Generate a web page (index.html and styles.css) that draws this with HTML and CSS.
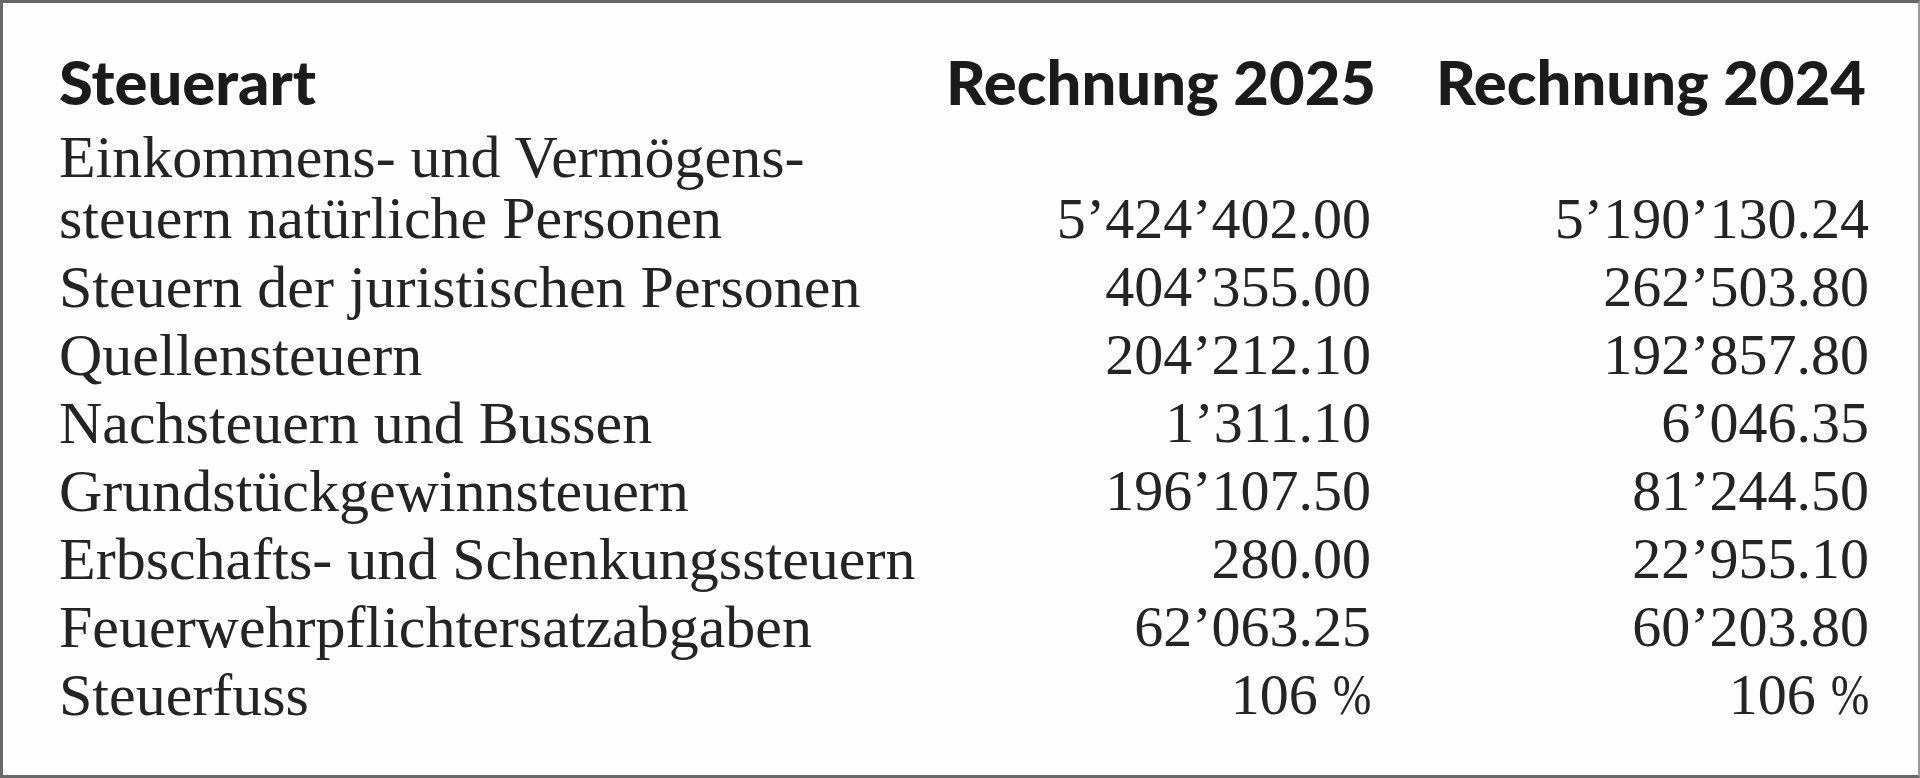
FILE: index.html
```html
<!DOCTYPE html>
<html lang="de">
<head>
<meta charset="utf-8">
<title>Steuerarten</title>
<link rel="stylesheet" href="styles.css">
</head>
<body>
<div class="frame">
  <div class="table">
    <div class="hd label">Steuerart</div>
    <div class="hd num">Rechnung 2025</div>
    <div class="hd num">Rechnung 2024</div>

    <div class="cell label two">Einkommens- und Vermögens-<br>steuern natürliche Personen</div>
    <div class="cell num">5’424’402.00</div>
    <div class="cell num">5’190’130.24</div>

    <div class="cell label">Steuern der juristischen Personen</div>
    <div class="cell num">404’355.00</div>
    <div class="cell num">262’503.80</div>

    <div class="cell label">Quellensteuern</div>
    <div class="cell num">204’212.10</div>
    <div class="cell num">192’857.80</div>

    <div class="cell label">Nachsteuern und Bussen</div>
    <div class="cell num">1’311.10</div>
    <div class="cell num">6’046.35</div>

    <div class="cell label">Grundstückgewinnsteuern</div>
    <div class="cell num">196’107.50</div>
    <div class="cell num">81’244.50</div>

    <div class="cell label">Erbschafts- und Schenkungssteuern</div>
    <div class="cell num">280.00</div>
    <div class="cell num">22’955.10</div>

    <div class="cell label">Feuerwehrpflichtersatzabgaben</div>
    <div class="cell num">62’063.25</div>
    <div class="cell num">60’203.80</div>

    <div class="cell label">Steuerfuss</div>
    <div class="cell num">106&#8202;<span class="pct">%</span></div>
    <div class="cell num">106&#8202;<span class="pct">%</span></div>
  </div>
</div>
</body>
</html>
```

FILE: styles.css
```css
html, body {
  margin: 0;
  padding: 0;
  background: #ffffff;
}

.frame {
  box-sizing: border-box;
  width: 1920px;
  height: 778px;
  border-top: 3px solid #666666;
  border-left: 3px solid #6a6a6a;
  border-bottom: 3px solid #6a6a6a;
  border-right: 2px solid #9a9a9a;
  background: #fefefe;
  padding: 44px 49px 0 56px;
  color: #1e1e1e;
}

.table {
  display: grid;
  grid-template-columns: 1fr 425px 498px;
}

.hd {
  font-family: Lato, "Open Sans", sans-serif;
  font-weight: 900;
  font-size: 61.5px;
  line-height: 68px;
  margin-bottom: 12px;
  color: #1b1b1b;
}

.hd.num {
  padding-right: 3px;
}

.cell {
  font-family: "Liberation Serif", "Times New Roman", serif;
  font-size: 60px;
  line-height: 68px;
  color: #242424;
}

.cell.num {
  font-size: 58px;
}

.num {
  text-align: right;
  align-self: end;
  white-space: nowrap;
}

.label {
  white-space: nowrap;
}

.label.two {
  line-height: 61px;
  padding-bottom: 4px;
}

.pct {
  display: inline-block;
  transform: scaleX(0.8);
  transform-origin: right center;
}
```
